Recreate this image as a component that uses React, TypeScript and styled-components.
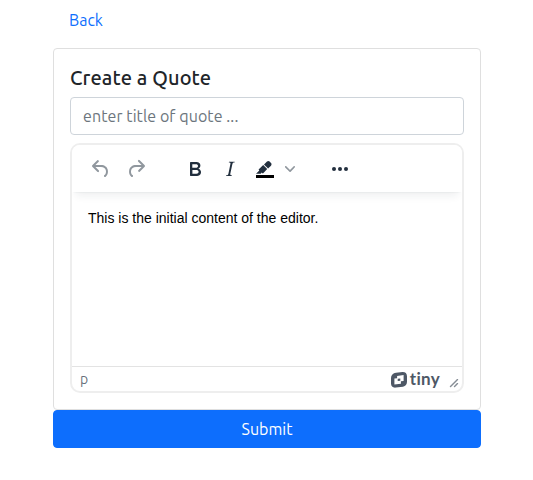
import React from 'react';
import styled, { createGlobalStyle } from 'styled-components';

const GlobalStyle = createGlobalStyle`
  *, *::before, *::after { box-sizing: border-box; }
  body {
    margin: 0;
    background: #fff;
    color: #212529;
    font: 400 16px/24px Ubuntu, "Noto Sans", sans-serif;
  }
`;

const Page = styled.main`
  width: 428px;
  margin-left: 53px;
  padding-top: 8px;
`;

const BackLink = styled.a`
  display: block;
  width: max-content;
  height: 24px;
  margin: 0 0 16px 16px;
  color: #0d6efd;
  text-decoration: none;
`;

const Card = styled.section`
  display: flex;
  flex-direction: column;
  height: 362px;
  padding: 16px;
  border: 1px solid #dfdfdf;
  border-radius: 4px;
`;

const Title = styled.h5`
  margin: 1px 0 7px;
  font-size: 20px;
  font-weight: 500;
  line-height: 24px;
  letter-spacing: 0.12px;
`;

const TitleInput = styled.input`
  width: 100%;
  height: 38px;
  margin: 0 0 8px;
  padding: 6px 12px;
  border: 1px solid #ced4da;
  border-radius: 4px;
  color: #212529;
  font: inherit;
  letter-spacing: 0.08px;
  &::placeholder { color: #6c757d; opacity: 1; }
`;

const Editor = styled.div`
  display: flex;
  flex-direction: column;
  height: 250px;
  border: 2px solid #eee;
  border-radius: 10px;
  overflow: hidden;
`;

const Toolbar = styled.div`
  display: flex;
  align-items: center;
  height: 47px;
  padding: 1px 11px 0 12px;
  background: #fff;
  box-shadow: 0 2px 2px -2px rgba(34, 47, 62, 0.1), 0 8px 8px -4px rgba(34, 47, 62, 0.07);
`;

const Group = styled.div`
  display: flex;
  gap: 1px;
  margin-right: 25px;
`;

const ToolButton = styled.button<{ $muted?: boolean }>`
  display: flex;
  align-items: center;
  justify-content: center;
  width: 34px;
  height: 28px;
  padding: 0;
  border: 0;
  background: none;
  fill: ${({ $muted }) => ($muted ? 'rgba(34, 47, 62, 0.5)' : '#222f3e')};
`;

const ChevronButton = styled(ToolButton)`
  width: 16px;
  margin-left: -1px;
`;

const Content = styled.div`
  flex: 1;
  padding: 17px 16px 0;
  color: #000;
  font: 14px/19.6px "Liberation Sans", Arial, sans-serif;
`;

const StatusBar = styled.footer`
  display: flex;
  align-items: center;
  height: 25px;
  padding: 0 3px 0 8px;
  border-top: 1px solid #e3e3e3;
  color: rgba(34, 47, 62, 0.7);
  font-size: 14px;
`;

const ElementPath = styled.span`
  flex: 1;
`;

const Brand = styled.span`
  display: flex;
  align-items: center;
  gap: 3px;
  height: 20px;
  margin: 2px 9px 0 0;
  color: #4e5866;
  font: 700 17px/20px Lato, sans-serif;
`;

const BrandName = styled.span`
  margin-top: -2px;
  letter-spacing: 0.3px;
`;

const ResizeHandle = styled.svg`
  margin-top: 8px;
  fill: rgba(34, 47, 62, 0.55);
`;

const SubmitButton = styled.button`
  display: block;
  width: 100%;
  height: 38px;
  padding: 6px 12px;
  border: 1px solid #0d6efd;
  border-radius: 4px;
  background: #0d6efd;
  color: #fff;
  font: inherit;
`;

const Icon = ({ d }: { d: string }) => (
  <svg width="24" height="24" viewBox="0 0 24 24"><path fillRule="evenodd" d={d} /></svg>
);

const UNDO = 'M6.4 8H12c3.7 0 6.2 2 6.8 5.1.6 2.7-.4 5.6-2.3 6.8a1 1 0 0 1-1-1.8c1.1-.6 1.8-2.7 1.4-4.6-.5-2.1-2.1-3.5-4.9-3.5H6.4l3.3 3.3a1 1 0 1 1-1.4 1.4l-5-5a1 1 0 0 1 0-1.4l5-5a1 1 0 0 1 1.4 1.4L6.4 8Z';
const REDO = 'M17.6 10H12c-2.8 0-4.4 1.4-4.9 3.5-.4 2 .3 4 1.4 4.6a1 1 0 1 1-1 1.8c-2-1.2-2.9-4.1-2.3-6.8.6-3 3-5.1 6.8-5.1h5.6l-3.3-3.3a1 1 0 1 1 1.4-1.4l5 5a1 1 0 0 1 0 1.4l-5 5a1 1 0 0 1-1.4-1.4l3.3-3.3Z';
const BOLD = 'M7.8 19c-.3 0-.5 0-.6-.2l-.2-.5V5.7c0-.2 0-.4.2-.5l.6-.2h5c1.5 0 2.7.3 3.5 1 .7.6 1.1 1.4 1.1 2.5a3 3 0 0 1-.6 1.9c-.4.6-1 1-1.6 1.2.4.1.9.3 1.3.6s.8.7 1 1.2c.4.4.5 1 .5 1.6 0 1.3-.4 2.3-1.3 3-.8.7-2.1 1-3.8 1H7.8Zm5-8.3c.6 0 1.2-.1 1.6-.5.4-.3.6-.7.6-1.3 0-1.1-.8-1.7-2.3-1.7H9.3v3.5h3.4Zm.5 6c.7 0 1.3-.1 1.7-.4.4-.4.6-.9.6-1.5s-.2-1-.7-1.4c-.4-.3-1-.4-2-.4H9.4v3.8h4Z';
const ITALIC = 'm16.7 4.7-.1.9h-.3c-.6 0-1 0-1.4.3-.3.3-.4.6-.5 1.1l-2.1 9.8v.6c0 .5.4.8 1.4.8h.2l-.2.8H8l.2-.8h.2c1.1 0 1.8-.5 2-1.5l2-9.8.1-.5c0-.6-.4-.8-1.4-.8h-.3l.2-.9h5.8Z';
const HIGHLIGHT = 'M7.7 16.7H3l3.3-3.3-.7-.8L10.2 8l4 4.1-4 4.2c-.2.2-.6.2-.8 0l-.6-.7-1.1 1.1zm5-7.5L11 7.4l3-2.9a2 2 0 0 1 2.6 0L18 6c.7.7.7 2 0 2.7l-2.9 2.9-1.8-1.8-.5-.6';

export default function App() {
  return (
    <>
      <GlobalStyle />
      <Page>
        <BackLink href="#">Back</BackLink>
        <Card>
          <Title>Create a Quote</Title>
          <TitleInput placeholder="enter title of quote ..." />
          <Editor>
            <Toolbar>
              <Group>
                <ToolButton $muted aria-label="Undo"><Icon d={UNDO} /></ToolButton>
                <ToolButton $muted aria-label="Redo"><Icon d={REDO} /></ToolButton>
              </Group>
              <Group>
                <ToolButton aria-label="Bold"><Icon d={BOLD} /></ToolButton>
                <ToolButton aria-label="Italic"><Icon d={ITALIC} /></ToolButton>
                <ToolButton aria-label="Background color">
                  <svg width="24" height="24" viewBox="0 0 24 24">
                    <path fill="#000" d="M3 18h18v3H3z" />
                    <path d={HIGHLIGHT} />
                  </svg>
                </ToolButton>
                <ChevronButton $muted aria-label="Background color menu">
                  <svg width="10" height="10" viewBox="0 0 10 10">
                    <path d="M8.7 2.2c.3-.3.8-.3 1 0 .4.4.4.9 0 1.2L5.7 7.8c-.3.3-.9.3-1.2 0L.2 3.4a.8.8 0 0 1 0-1.2c.3-.3.8-.3 1.1 0L5 6l3.7-3.8Z" />
                  </svg>
                </ChevronButton>
              </Group>
              <ToolButton aria-label="More">
                <svg width="24" height="24" viewBox="0 0 24 24">
                  <circle cx="6" cy="12" r="2" />
                  <circle cx="12" cy="12" r="2" />
                  <circle cx="18" cy="12" r="2" />
                </svg>
              </ToolButton>
            </Toolbar>
            <Content>This is the initial content of the editor.</Content>
            <StatusBar>
              <ElementPath>p</ElementPath>
              <Brand>
                <svg width="16" height="16" viewBox="0 0 16 16">
                  <path
                    fill="currentColor"
                    fillRule="evenodd"
                    d="M5 .8 11.5.1C14.3 0 16 1.5 16 4.3V9.8C16 12.5 14.6 14.2 12 14.7L4.8 15.6C1.7 15.9 0 14.3 0 11.5V6C0 3.2 2 1.2 5 .8ZM6.1 3.9V6.2L3.4 6.6V12.6L9.9 11.7V9.3L12.6 8.9V3ZM6.7 6.8 9.3 6.4V8.7L6.7 9.1Z"
                  />
                </svg>
                <BrandName>tiny</BrandName>
              </Brand>
              <ResizeHandle width="10" height="10" viewBox="0 0 10 10">
                <path d="M8.1 1.1A.5.5 0 1 1 9 2l-7 7A.5.5 0 1 1 1 8l7-7ZM8.1 5.1A.5.5 0 1 1 9 6l-3 3A.5.5 0 1 1 5 8l3-3Z" />
              </ResizeHandle>
            </StatusBar>
          </Editor>
        </Card>
        <SubmitButton>Submit</SubmitButton>
      </Page>
    </>
  );
}
